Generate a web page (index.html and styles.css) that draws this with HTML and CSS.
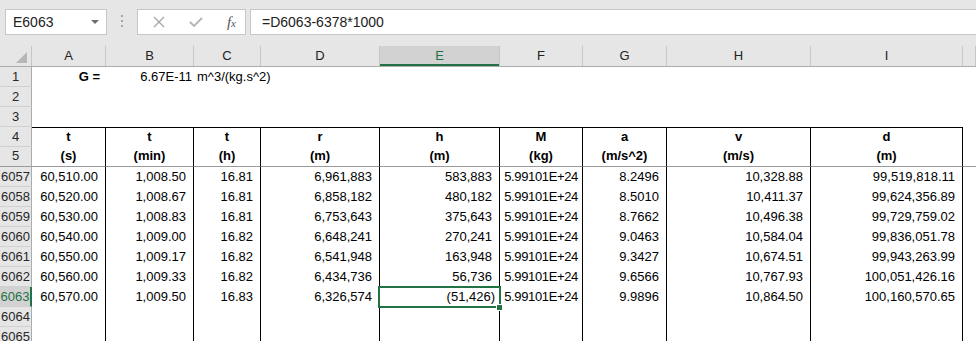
FILE: index.html
```html
<!DOCTYPE html>
<html lang="en">
<head>
  <meta charset="UTF-8" />
  <title>Sheet</title>
  <link rel="stylesheet" href="styles.css">
</head>
<body>
  <div class="toolbar">
    <div class="namebox">
      <span>E6063</span>
      <span class="drop"></span>
    </div>
    <div class="dots"><i></i><i></i><i></i></div>
    <div class="fxbox">
      <svg class="ico" width="14" height="14" viewBox="0 0 14 14"><path d="M2 2 L12 12 M12 2 L2 12" stroke="#a8a8a8" stroke-width="1.4" fill="none"/></svg>
      <svg class="ico" width="16" height="14" viewBox="0 0 16 14"><path d="M2 7 L6 11 L14 3" stroke="#b4b4b4" stroke-width="1.8" fill="none"/></svg>
      <span class="fx"><i>f</i><small>x</small></span>
    </div>
    <div class="formula">=D6063-6378*1000</div>
  </div>

  <div class="sheet">
    <div class="row colhead">
      <div class="corner"></div>
      <div>A</div><div>B</div><div>C</div><div>D</div>
      <div class="sel">E</div>
      <div>F</div><div>G</div><div>H</div><div>I</div><div></div>
    </div>

    <div class="row">
      <div class="rh">1</div>
      <div class="c r b">G =</div>
      <div class="c r tight">6.67E-11</div>
      <div class="c l">m^3/(kg.s^2)</div>
      <div class="c"></div><div class="c"></div><div class="c"></div><div class="c"></div><div class="c"></div><div class="c"></div><div class="c"></div>
    </div>
    <div class="row">
      <div class="rh">2</div>
      <div class="c"></div><div class="c"></div><div class="c"></div><div class="c"></div><div class="c"></div><div class="c"></div><div class="c"></div><div class="c"></div><div class="c"></div><div class="c"></div>
    </div>
    <div class="row">
      <div class="rh">3</div>
      <div class="c"></div><div class="c"></div><div class="c"></div><div class="c"></div><div class="c"></div><div class="c"></div><div class="c"></div><div class="c"></div><div class="c"></div><div class="c"></div>
    </div>

    <div class="row table head-top">
      <div class="rh">4</div>
      <div class="c">t</div><div class="c">t</div><div class="c">t</div><div class="c">r</div><div class="c">h</div>
      <div class="c">M</div><div class="c">a</div><div class="c">v</div><div class="c">d</div><div class="x"></div>
    </div>
    <div class="row table head-bot">
      <div class="rh">5</div>
      <div class="c">(s)</div><div class="c">(min)</div><div class="c">(h)</div><div class="c">(m)</div><div class="c">(m)</div>
      <div class="c">(kg)</div><div class="c">(m/s^2)</div><div class="c">(m/s)</div><div class="c">(m)</div><div class="x"></div>
    </div>

    <div class="row table data">
      <div class="rh">6057</div>
      <div class="c">60,510.00</div><div class="c">1,008.50</div><div class="c">16.81</div><div class="c">6,961,883</div><div class="c">583,883</div>
      <div class="c sci">5.99101E+24</div><div class="c">8.2496</div><div class="c">10,328.88</div><div class="c">99,519,818.11</div><div class="x"></div>
    </div>
    <div class="row table data">
      <div class="rh">6058</div>
      <div class="c">60,520.00</div><div class="c">1,008.67</div><div class="c">16.81</div><div class="c">6,858,182</div><div class="c">480,182</div>
      <div class="c sci">5.99101E+24</div><div class="c">8.5010</div><div class="c">10,411.37</div><div class="c">99,624,356.89</div><div class="x"></div>
    </div>
    <div class="row table data">
      <div class="rh">6059</div>
      <div class="c">60,530.00</div><div class="c">1,008.83</div><div class="c">16.81</div><div class="c">6,753,643</div><div class="c">375,643</div>
      <div class="c sci">5.99101E+24</div><div class="c">8.7662</div><div class="c">10,496.38</div><div class="c">99,729,759.02</div><div class="x"></div>
    </div>
    <div class="row table data">
      <div class="rh">6060</div>
      <div class="c">60,540.00</div><div class="c">1,009.00</div><div class="c">16.82</div><div class="c">6,648,241</div><div class="c">270,241</div>
      <div class="c sci">5.99101E+24</div><div class="c">9.0463</div><div class="c">10,584.04</div><div class="c">99,836,051.78</div><div class="x"></div>
    </div>
    <div class="row table data">
      <div class="rh">6061</div>
      <div class="c">60,550.00</div><div class="c">1,009.17</div><div class="c">16.82</div><div class="c">6,541,948</div><div class="c">163,948</div>
      <div class="c sci">5.99101E+24</div><div class="c">9.3427</div><div class="c">10,674.51</div><div class="c">99,943,263.99</div><div class="x"></div>
    </div>
    <div class="row table data">
      <div class="rh">6062</div>
      <div class="c">60,560.00</div><div class="c">1,009.33</div><div class="c">16.82</div><div class="c">6,434,736</div><div class="c">56,736</div>
      <div class="c sci">5.99101E+24</div><div class="c">9.6566</div><div class="c">10,767.93</div><div class="c">100,051,426.16</div><div class="x"></div>
    </div>
    <div class="row table data">
      <div class="rh sel">6063</div>
      <div class="c">60,570.00</div><div class="c">1,009.50</div><div class="c">16.83</div><div class="c">6,326,574</div><div class="c active neg">(51,426)</div>
      <div class="c sci">5.99101E+24</div><div class="c">9.9896</div><div class="c">10,864.50</div><div class="c">100,160,570.65</div><div class="x"></div>
    </div>
    <div class="row table data">
      <div class="rh">6064</div>
      <div class="c"></div><div class="c"></div><div class="c"></div><div class="c"></div><div class="c"></div>
      <div class="c"></div><div class="c"></div><div class="c"></div><div class="c"></div><div class="x"></div>
    </div>
    <div class="row table data">
      <div class="rh">6065</div>
      <div class="c"></div><div class="c"></div><div class="c"></div><div class="c"></div><div class="c"></div>
      <div class="c"></div><div class="c"></div><div class="c"></div><div class="c"></div><div class="x"></div>
    </div>
  </div>
</body>
</html>
```

FILE: styles.css
```css
body {
  margin: 0;
  background: #fff;
  font-family: "Liberation Sans", Arial, sans-serif;
  overflow: hidden;
}
.toolbar {
  display: flex;
  align-items: flex-start;
  height: 45px;
  padding-top: 9px;
  box-sizing: border-box;
  background: #e6e6e6;
  font-size: 14px;
  color: #222;
}
.namebox {
  display: flex;
  align-items: center;
  justify-content: space-between;
  margin-left: 5px;
  width: 102px;
  height: 26px;
  padding: 0 7px 0 7px;
  box-sizing: border-box;
  background: #fff;
  border: 1px solid #c6c6c6;
}
.drop {
  width: 0;
  height: 0;
  border-left: 4px solid transparent;
  border-right: 4px solid transparent;
  border-top: 4px solid #6f6f6f;
}
.dots {
  display: flex;
  flex-direction: column;
  gap: 3px;
  width: 30px;
  align-items: center;
  padding-top: 6px;
}
.dots i {
  width: 2px;
  height: 2px;
  background: #a6a6a6;
}
.fxbox {
  display: flex;
  align-items: center;
  justify-content: space-between;
  width: 109px;
  height: 26px;
  padding: 0 9px 0 14px;
  box-sizing: border-box;
  background: #fff;
  border: 1px solid #c6c6c6;
}
.fx {
  font-family: "Liberation Serif", serif;
  color: #555;
  font-size: 15px;
}
.fx small {
  font-size: 11px;
  font-style: italic;
}
.formula {
  flex: 1;
  margin-left: 4px;
  height: 26px;
  line-height: 24px;
  padding-left: 11px;
  box-sizing: border-box;
  background: #fff;
  border: 1px solid #c6c6c6;
  border-right: none;
}

.sheet {
  font-size: 13px;
  color: #000;
}
.row {
  display: grid;
  grid-template-columns: 32px 74px 88px 67px 119px 120px 83px 84px 144px 152px 1fr;
  height: 20px;
}
.row > div {
  box-sizing: border-box;
  line-height: 19px;
  white-space: nowrap;
}
.colhead {
  background: #e6e6e6;
  border-top: 1px solid #e6e6e6;
  border-bottom: 1px solid #ababab;
  color: #222;
}
.colhead > div {
  text-align: center;
  border-right: 1px solid #c6c6c6;
  position: relative;
}
.colhead .sel {
  background: #d2d2d2;
  color: #217346;
  box-shadow: inset 0 -2px 0 #217346;
}
.corner {
  position: relative;
}
.corner::after {
  content: "";
  position: absolute;
  right: 4px;
  bottom: 3px;
  border-left: 11px solid transparent;
  border-bottom: 11px solid #b7b7b7;
}
.rh {
  background: #e6e6e6;
  border-right: 1px solid #ababab;
  border-bottom: 1px solid #d0d0d0;
  text-align: center;
  color: #262626;
  line-height: 19px;
}
.rh.sel {
  background: #d2d2d2;
  color: #217346;
  border-right: 2px solid #217346;
}
.c {
  padding-right: 7px;
  text-align: right;
}
.c.l {
  text-align: left;
  padding-left: 3px;
}
.c.b {
  font-weight: bold;
  padding-right: 6px;
}
.c.tight {
  padding-right: 2px;
}
.table .c {
  border-right: 1px solid #000;
}
.head-top .c,
.head-bot .c {
  text-align: center;
  font-weight: bold;
  padding-right: 0;
}
.head-top .c {
  border-top: 1px solid #000;
  line-height: 18px;
}
.head-bot > div {
  border-bottom: 1px solid #9a9a9a;
  line-height: 18px;
}
.c.sci {
  padding-right: 4px;
  letter-spacing: -0.35px;
}
.c.neg {
  padding-right: 4px;
}
.active {
  position: relative;
}
.active::after {
  content: "";
  position: absolute;
  left: -2px;
  top: -1px;
  right: -2px;
  bottom: -1px;
  border: 2px solid #217346;
}
.active::before {
  content: "";
  position: absolute;
  right: -4px;
  bottom: -4px;
  width: 5px;
  height: 5px;
  background: #217346;
  border: 1px solid #fff;
  z-index: 1;
}
```
